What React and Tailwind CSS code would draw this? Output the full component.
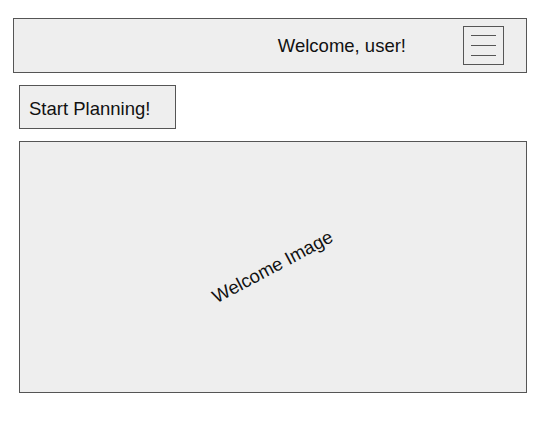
import React from "react";

const font = { fontFamily: "'Liberation Sans', Arial, sans-serif" };

const MenuButton = () => (
  <button className="flex h-[39px] w-[41px] flex-col items-center justify-center gap-[9px] border border-[#555555] bg-[#eeeeee]">
    <span className="block h-px w-[25px] bg-[#555555]"></span>
    <span className="block h-px w-[25px] bg-[#555555]"></span>
    <span className="block h-px w-[25px] bg-[#555555]"></span>
  </button>
);

export default function App() {
  return (
    <div className="min-h-[432px] bg-white pt-[18px] text-[#111111]" style={font}>
      {/* Header */}
      <header className="ml-[13px] flex h-[55px] w-[514px] items-center justify-end border border-[#555555] bg-[#eeeeee] pr-[22px]">
        <span className="text-[18.5px] leading-[normal]">Welcome, user!</span>
        <div className="ml-[57px]">
          <MenuButton />
        </div>
      </header>

      {/* Start button */}
      <button className="ml-[19px] mt-[12px] block h-[44px] w-[157px] border border-[#555555] bg-[#eeeeee] pl-[9px] pt-[3px] text-left align-top">
        <span className="block text-[18.5px] leading-[normal]">Start Planning!</span>
      </button>

      {/* Welcome image placeholder */}
      <div className="ml-[19px] mt-[12px] flex h-[252px] w-[508px] items-center justify-center border border-[#555555] bg-[#eeeeee]">
        <span className="-rotate-[28deg] text-[18.5px] leading-[normal]">Welcome Image</span>
      </div>
    </div>
  );
}
